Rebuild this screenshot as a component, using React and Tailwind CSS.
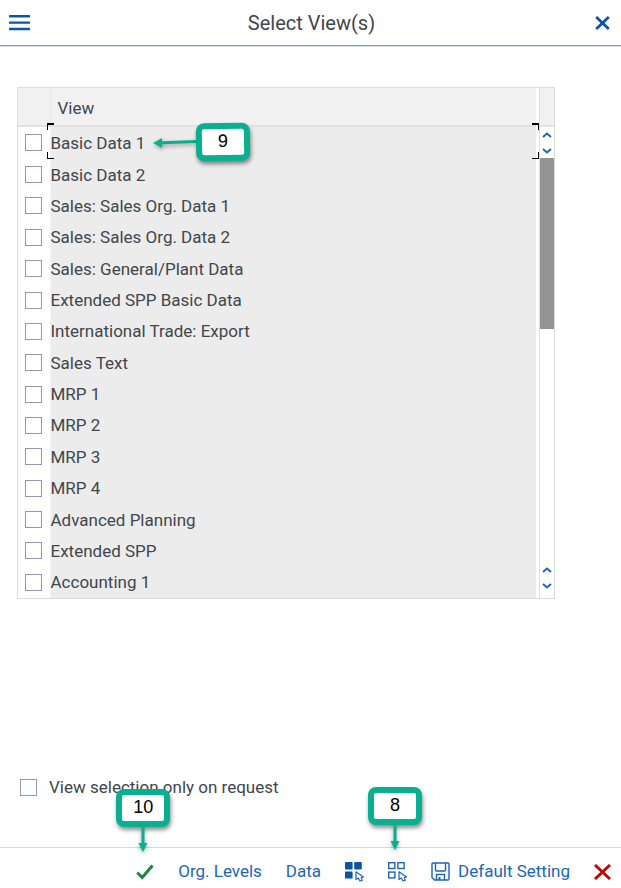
import React, { useState } from 'react';

const views = [
  'Basic Data 1',
  'Basic Data 2',
  'Sales: Sales Org. Data 1',
  'Sales: Sales Org. Data 2',
  'Sales: General/Plant Data',
  'Extended SPP Basic Data',
  'International Trade: Export',
  'Sales Text',
  'MRP 1',
  'MRP 2',
  'MRP 3',
  'MRP 4',
  'Advanced Planning',
  'Extended SPP',
  'Accounting 1',
];

const checkboxClass =
  'block size-[17px] shrink-0 appearance-none border border-[#8a9bb3] bg-white checked:bg-[#0a5aa8]';

function Chevron({ up }) {
  return (
    <svg width="10" height="6" viewBox="0 0 10 6" fill="none" stroke="#1d66b3" strokeWidth="2">
      <path d={up ? 'M1 5L5 1.6L9 5' : 'M1 1L5 4.4L9 1'} />
    </svg>
  );
}

// Par de setas usado no topo e na base da barra de rolagem
function ScrollButtons() {
  return (
    <div className="flex flex-col items-center gap-[10px] pt-[5px] pb-1">
      <button type="button" aria-label="Scroll up" className="block">
        <Chevron up />
      </button>
      <button type="button" aria-label="Scroll down" className="block">
        <Chevron />
      </button>
    </div>
  );
}

function Callout({ children }) {
  return (
    <span className="flex h-[38px] w-[54px] items-center justify-center rounded-lg border-[6px] border-[#08b08f] bg-white pb-0.5 font-['Liberation_Sans',Arial,sans-serif] text-lg leading-none text-black shadow-[1px_3px_4px_rgba(0,0,0,0.45)]">
      {children}
    </span>
  );
}

function DownArrow() {
  return (
    <svg width="10" height="25" viewBox="0 0 10 25" className="drop-shadow-[0_2px_2px_rgba(0,0,0,0.35)]">
      <path d="M3.5 0H6.5V16H9.5L5 25L0.5 16H3.5Z" fill="#08b08f" />
    </svg>
  );
}

// Cantos pretos que marcam a célula com foco
function FocusCorners() {
  return (
    <span className="pointer-events-none absolute -top-1 -right-[3px] bottom-0 -left-1">
      <span className="absolute top-0 left-0 size-[7px] border-t-2 border-l border-black" />
      <span className="absolute top-0 right-0 size-[7px] border-t-2 border-r border-black" />
      <span className="absolute bottom-0 left-0 size-[7px] border-b border-l border-black" />
      <span className="absolute right-0 bottom-0 size-[7px] border-r border-b border-black" />
    </span>
  );
}

function Cursor() {
  return (
    <path
      d="M11 9.8V17.6L13.3 16L15 19L17.2 18.4L16.2 15.6L18.4 15Z"
      fill="#fff"
      stroke="#1d66b3"
      strokeWidth="1.2"
      strokeLinejoin="round"
    />
  );
}

function SelectAllIcon() {
  return (
    <svg width="19" height="20" viewBox="0 0 19 20">
      <g fill="#0a56a5">
        <rect x="0" y="0" width="7.6" height="7.4" rx="1" />
        <rect x="9.2" y="0" width="7.6" height="7.4" rx="1" />
        <rect x="0" y="9.6" width="7.6" height="7" rx="0.5" />
      </g>
      <Cursor />
    </svg>
  );
}

function DeselectAllIcon() {
  return (
    <svg width="19" height="20" viewBox="0 0 19 20">
      <g fill="none" stroke="#1d66b3" strokeWidth="1.4">
        <rect x="0.7" y="0.7" width="6.2" height="5.8" />
        <rect x="9.9" y="0.7" width="6.2" height="5.8" />
        <rect x="0.7" y="10.1" width="6.2" height="5.8" />
      </g>
      <Cursor />
    </svg>
  );
}

function SaveIcon() {
  return (
    <svg width="19" height="19" viewBox="0 0 19 19" fill="none" stroke="#1d66b3" strokeWidth="1.4">
      <path d="M1 2Q1 1 2 1H17Q18 1 18 2V17Q18 18 17 18H3.5L1 15.5Z" />
      <path d="M4.5 1V8Q4.5 9 5.5 9H13.5Q14.5 9 14.5 8V1" />
      <path d="M5.5 18V12.5H13.5V18" />
      <path d="M8.5 15V18" strokeWidth="2" />
    </svg>
  );
}

function Header() {
  return (
    <header className="flex h-[46px] items-center justify-between border-b border-[#7f9cbc] px-[9px] shadow-[0_1px_0_#d5dfea]">
      <button type="button" aria-label="Menu" className="block">
        <svg width="21" height="16" viewBox="0 0 21 16" fill="#0a56a5">
          <rect y="0" width="21" height="2.4" rx="0.5" />
          <rect y="6.4" width="21" height="2.4" rx="0.5" />
          <rect y="12.8" width="21" height="2.4" rx="0.5" />
        </svg>
      </button>
      <h1 className="text-xl">Select View(s)</h1>
      <button type="button" aria-label="Close" className="block px-0.5">
        <svg width="15" height="14" viewBox="0 0 15 14" fill="none" stroke="#0a56a5" strokeWidth="2.8">
          <path d="M1.2 1L13.8 13M13.8 1L1.2 13" />
        </svg>
      </button>
    </header>
  );
}

function ViewRow({ name, index, checked, onToggle }) {
  const id = `view-${index}`;
  return (
    <tr>
      <td className="w-8 bg-white p-0 pl-[7px] align-middle">
        <input id={id} type="checkbox" checked={checked} onChange={onToggle} className={checkboxClass} />
      </td>
      <td className="relative border-l border-[#f4f4f4] bg-[#ececec] p-0 align-middle">
        <label htmlFor={id} className="block leading-5">
          {name}
        </label>
        {index === 0 && (
          <>
            <FocusCorners />
            <span className="absolute -top-1 left-[102px] z-10 flex items-center">
              <svg width="43" height="12" viewBox="0 0 43 12" className="drop-shadow-[1px_2px_2px_rgba(0,0,0,0.35)]">
                <path d="M0 7L9 2V5.3L43 4V7L9 8.3V12Z" fill="#08b08f" />
              </svg>
              <span className="-rotate-1">
                <Callout>9</Callout>
              </span>
            </span>
          </>
        )}
      </td>
    </tr>
  );
}

function ViewTable() {
  const [selected, setSelected] = useState([]);

  const toggle = (name) => {
    setSelected((prev) => (prev.includes(name) ? prev.filter((v) => v !== name) : [...prev, name]));
  };

  return (
    <section className="mt-[41px] mr-[66px] ml-[17px] flex border border-[#dcdcdc]">
      <table className="h-[510px] flex-1 border-collapse">
        <thead>
          <tr className="h-[38px] border-b-2 border-[#e2e2e2] bg-[#f1f1f1]">
            <th aria-label="Selection" className="w-8 p-0" />
            <th className="border-l border-[#e6e6e6] p-0 pt-1 pl-[7px] text-left font-normal">View</th>
          </tr>
        </thead>
        <tbody>
          {views.map((name, index) => (
            <ViewRow
              key={name}
              name={name}
              index={index}
              checked={selected.includes(name)}
              onToggle={() => toggle(name)}
            />
          ))}
        </tbody>
      </table>
      <div className="ml-[3px] flex w-[15px] flex-col border-l border-[#dedede]">
        <div className="h-[39px] border-b-2 border-[#e2e2e2] bg-[#f1f1f1]" />
        <ScrollButtons />
        <div className="flex-1">
          <div className="h-[171px] bg-[#939393]" />
        </div>
        <div className="pb-[5px]">
          <ScrollButtons />
        </div>
      </div>
    </section>
  );
}

function Footer() {
  return (
    <footer className="flex h-[41px] items-center justify-end gap-6 border-t border-[#d9d9d9] pt-[7px] pr-[10px] text-[#1d66b3]">
      <button type="button" aria-label="Continue" className="relative">
        <svg width="18" height="16" viewBox="0 0 18 16" fill="none" stroke="#188a42" strokeWidth="3">
          <path d="M1.2 8.5L6.2 13.5L16.5 1.5" />
        </svg>
        <span className="absolute -left-5 bottom-7 flex flex-col items-center">
          <Callout>10</Callout>
          <DownArrow />
        </span>
      </button>
      <button type="button">Org. Levels</button>
      <button type="button">Data</button>
      <button type="button" aria-label="Select all">
        <SelectAllIcon />
      </button>
      <button type="button" aria-label="Deselect all" className="relative">
        <DeselectAllIcon />
        <span className="absolute bottom-8 -left-5 flex flex-col items-center">
          <Callout>8</Callout>
          <DownArrow />
        </span>
      </button>
      <button type="button" className="flex items-center gap-2">
        <SaveIcon />
        Default Setting
      </button>
      <button type="button" aria-label="Cancel">
        <svg width="17" height="16" viewBox="0 0 17 16" fill="none" stroke="#c00a0a" strokeWidth="3">
          <path d="M1 1L16 15M16 1L1 15" />
        </svg>
      </button>
    </footer>
  );
}

function App() {
  return (
    <div className="flex min-h-screen flex-col bg-white font-[Roboto,'Noto_Sans',sans-serif] text-[17px] text-[#41464b]">
      <Header />
      <main className="flex flex-1 flex-col justify-between">
        <ViewTable />
        <label className="mb-[47px] ml-5 flex items-center gap-3">
          <input type="checkbox" className={checkboxClass} />
          View selection only on request
        </label>
      </main>
      <Footer />
    </div>
  );
}

export default App;
